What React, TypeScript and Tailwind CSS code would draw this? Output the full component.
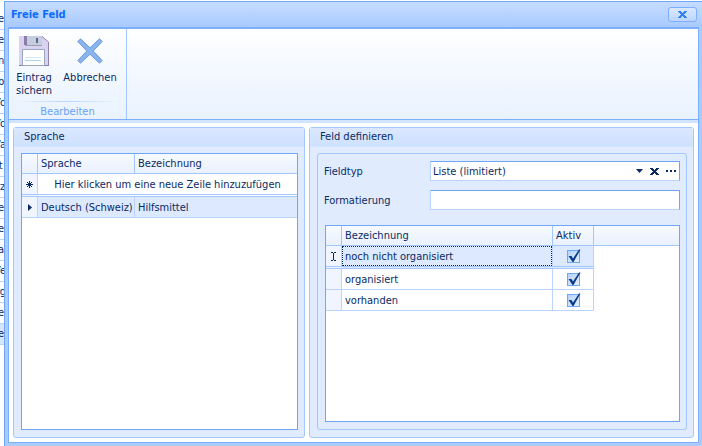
import { useState } from 'react';
import type { ReactNode } from 'react';

const backgroundRows = ['e', 'e', 'n', 'b', 'Vo', 'Vo', 'Va', 'lt', 'rz', 'e', 'e', 'a', 'Ve', 'rg', 'e', 'e'];

const initialValues = [
  { name: 'noch nicht organisiert', active: true },
  { name: 'organisiert', active: true },
  { name: 'vorhanden', active: true },
];

function SaveIcon() {
  return (
    <svg width="30" height="30" viewBox="0 0 30 30">
      <path d="M0 0H23L29.500 6V29.500H0Z" fill="#d9d3ef" />
      <path d="M23 0.500L29.500 6V29.500" fill="none" stroke="#9080b4" />
      <path d="M0 29h30v1H0z" fill="#8878b0" />
      <path d="M6 0h17v9H6z" fill="#c6cede" />
      <path d="M5 0h3v9H5z" fill="#8b7cae" />
      <path d="M6 9h17v1H6z" fill="#9aa0b8" />
      <path d="M17 2h2v5h-2z" fill="#586c8c" />
      <path d="M3.500 13.500h22v16h-22z" fill="#fff" stroke="#9aa6c6" />
      <path d="M6 21h16v1H6z" fill="#cfe9f8" />
      <path d="M6 24h16v1H6z" fill="#aad7ef" />
    </svg>
  );
}

function CancelIcon() {
  return (
    <svg width="26" height="26" viewBox="0 0 26 26">
      <path
        d="M3.5 0.8L13 9.8L22.5 0.8L25.2 3.5L16.2 13L25.2 22.5L22.5 25.2L13 16.2L3.5 25.2L0.8 22.5L9.8 13L0.8 3.5Z"
        fill="#8ab4ec"
        stroke="#6c9be0"
      />
    </svg>
  );
}

function CrossIcon() {
  return (
    <svg width="9" height="7" viewBox="0 0 9 7" fill="currentColor" shapeRendering="crispEdges">
      <path d="M0 0h3v1H0zM6 0h3v1H6zM1 1h3v1H1zM5 1h3v1H5zM2 2h5v1H2zM3 3h3v1H3zM2 4h5v1H2zM1 5h3v1H1zM5 5h3v1H5zM0 6h3v1H0zM6 6h3v1H6z" />
    </svg>
  );
}

function Panel({ title, children }: { title: string; children: ReactNode }) {
  return (
    <section className="flex min-w-0 flex-col rounded-[3px] border border-[#a3c7ff] bg-[#e0ebfe]">
      <h2 className="h-[18px] bg-linear-to-b from-[#dbe8ff] to-[#cfe1fe] pl-2.5 leading-[18px]">{title}</h2>
      <div className="flex flex-1 flex-col border-t border-[#d6e5fe] p-[7px] pr-1.5 pt-1.5">{children}</div>
    </section>
  );
}

function Check({ label, checked, onChange }: { label: string; checked: boolean; onChange: () => void }) {
  return (
    <label className="relative mx-auto block size-[13px]">
      <input
        type="checkbox"
        aria-label={label}
        checked={checked}
        onChange={onChange}
        className="block size-[13px] appearance-none border border-[#6ea6fb] bg-linear-to-br from-[#b4d2fc] to-[#e4effe]"
      />
      {checked && (
        <svg className="pointer-events-none absolute -top-px left-0" width="14" height="14" viewBox="0 0 14 14">
          <path d="M1.500 7L4.500 7L6 9.500L12 0.500H13.500L6.500 13H5.500Z" fill="#0b3c8c" />
        </svg>
      )}
    </label>
  );
}

const headCell = 'h-5 border-b border-r border-[#a3c7ff] pl-[3px] text-left font-normal';
const cell = 'h-[21px] border-b border-r border-[#b9d5ff] pl-[3px]';
const indicator = 'border-b border-r border-[#b9d5ff] bg-[#f0f5ff]';
// the first row is set off from the rest by a double rule
const pinned = 'h-[23px] border-b-3 border-b-[#a3c7ff] [border-bottom-style:double]';

function LanguageGrid() {
  return (
    <div className="flex-1 border border-[#6ea6fb] bg-white">
      <table className="w-full table-fixed border-separate border-spacing-0">
        <colgroup>
          <col className="w-4" />
          <col className="w-[97px]" />
          <col />
        </colgroup>
        <thead className="bg-linear-to-b from-[#f7faff] to-[#e9f1fe]">
          <tr>
            <th className={headCell} />
            <th className={headCell}>Sprache</th>
            <th className={`${headCell} border-r-0`}>Bezeichnung</th>
          </tr>
        </thead>
        <tbody>
          <tr>
            <td className={`${indicator} ${pinned}`}>
              <svg className="mx-auto" width="7" height="7" viewBox="0 0 7 7" stroke="#0a2a66">
                <path d="M3.500 0v7M0 3.500h7M1 1l5 5M6 1L1 6" />
              </svg>
            </td>
            <td colSpan={2} className={`${pinned} text-center`}>
              Hier klicken um eine neue Zeile hinzuzufügen
            </td>
          </tr>
          <tr className="bg-[#dde9fe]">
            <td className={indicator}>
              <svg className="ml-1.5" width="4" height="7" viewBox="0 0 4 7" fill="#0a2a66">
                <path d="M0 0L4 3.500L0 7Z" />
              </svg>
            </td>
            <td className={`${cell} whitespace-nowrap`}>Deutsch (Schweiz)</td>
            <td className={`${cell} border-r-0`}>Hilfsmittel</td>
          </tr>
        </tbody>
      </table>
    </div>
  );
}

function ValueGrid() {
  const [values, setValues] = useState(initialValues);

  const toggle = (name: string) =>
    setValues(values.map((v) => (v.name === name ? { ...v, active: !v.active } : v)));

  return (
    <div className="flex-1 border border-[#6ea6fb] bg-white">
      <table className="w-full table-fixed border-separate border-spacing-0">
        <colgroup>
          <col className="w-4" />
          <col />
          <col className="w-[41px]" />
          <col className="w-[85px]" />
        </colgroup>
        <thead className="bg-linear-to-b from-[#f7faff] to-[#e9f1fe]">
          <tr>
            <th className={headCell} />
            <th className={headCell}>Bezeichnung</th>
            <th className={headCell}>Aktiv</th>
            <th className={`${headCell} border-r-0`} />
          </tr>
        </thead>
        <tbody>
          {values.map(({ name, active }, i) => (
            <tr key={name}>
              <td className={`${indicator} ${i === 0 ? pinned : ''}`}>
                {i === 0 && (
                  <svg className="mx-auto" width="5" height="9" viewBox="0 0 5 9" stroke="#0a2a66" fill="none">
                    <path d="M0 0.500h2M3 0.500h2M0 8.500h2M3 8.500h2M2.500 1v7" />
                  </svg>
                )}
              </td>
              {i === 0 ? (
                <td className={`border-r border-r-[#b9d5ff] bg-[#dde9fe] ${pinned}`}>
                  <div className="flex h-5 items-center border border-dotted border-[#0a2a66] pl-0.5">{name}</div>
                </td>
              ) : (
                <td className={cell}>{name}</td>
              )}
              <td className={`border-b border-r border-[#b9d5ff] ${i === 0 ? `${pinned} bg-[#dde9fe]` : ''}`}>
                <Check label={`${name} aktiv`} checked={active} onChange={() => toggle(name)} />
              </td>
              <td />
            </tr>
          ))}
        </tbody>
      </table>
    </div>
  );
}

export default function App() {
  return (
    <div className="flex min-h-screen bg-white font-['DejaVu_Sans_Condensed','DejaVu_Sans',sans-serif] text-[11px] leading-[13px] text-[#0a2a66]">
      <aside className="w-1 shrink-0 overflow-hidden pt-[9px]">
        {backgroundRows.map((text, i) => (
          <div
            key={i}
            className={`h-[21px] border-b border-[#b9d5ff] leading-5 ${i === 15 ? 'bg-[#d6e5fe]' : ''}`}
          >
            <span className={text.startsWith('V') ? '-ml-1.5' : text.length > 1 ? '-ml-1' : '-ml-0.5'}>{text}</span>
          </div>
        ))}
      </aside>

      <div className="flex min-w-0 flex-1 flex-col pt-px">
        <main className="flex flex-1 flex-col border-l border-t border-[#6ea6fb] bg-[#abcbff]">
          <header className="flex h-[25px] items-center justify-between bg-linear-to-b from-[#c6dcff] to-[#a9caff] pl-1.5 pr-[5px]">
            <h1 className="font-bold text-[#0a6cff]">Freie Feld</h1>
            <button
              type="button"
              aria-label="Schliessen"
              className="flex h-[15px] w-[29px] items-center justify-center rounded-[3px] border border-[#7ab0ff] bg-linear-to-b from-[#dbe8ff] to-[#bcd6ff] text-[#2f80f0]"
            >
              <CrossIcon />
            </button>
          </header>

          <div className="mb-[3px] ml-[3px] mr-[3px] flex flex-1 flex-col border border-t-2 border-[#7ab0ff] bg-white">
            <div className="flex h-[91px] border-b border-[#7ab0ff] bg-linear-to-b from-white via-[#f3f8ff] to-[#e9f2fe]">
              <div className="flex w-[118px] flex-col border-r border-[#a3c7ff] px-[5px]">
                <div className="flex flex-1 items-start gap-1.5 pt-[7px]">
                  <button type="button" className="flex w-10 flex-col items-center gap-[5px]">
                    <SaveIcon />
                    <span>Eintrag sichern</span>
                  </button>
                  <button type="button" className="flex w-[60px] flex-col items-center gap-[7px] pt-0.5">
                    <CancelIcon />
                    <span>Abbrechen</span>
                  </button>
                </div>
                <div className="h-px bg-linear-to-r from-transparent via-[#b9d5ff] to-transparent" />
                <div className="h-[17px] text-center leading-5 text-[#68a2f8]">Bearbeiten</div>
              </div>
            </div>
            <div className="h-[3px] bg-[#d2e3ff]" />

            <div className="grid flex-1 grid-cols-[292fr_385fr] gap-1 p-1">
              <Panel title="Sprache">
                <LanguageGrid />
              </Panel>
              <Panel title="Feld definieren">
                <div className="flex flex-1 flex-col rounded-[3px] border border-[#a3c7ff] p-[7px] pr-1.5">
                  <div className="grid grid-cols-[105px_1fr] items-center gap-y-[9px]">
                    <label htmlFor="fieldtyp" className="-ml-px">
                      Fieldtyp
                    </label>
                    <div className="flex h-5 items-center border border-[#b9d5ff] border-t-[#6ea6fb] border-r-[#6ea6fb] bg-white">
                      <div className="relative flex h-full flex-1 items-center">
                        <select id="fieldtyp" className="h-full w-full appearance-none pl-0.5 outline-none">
                          <option>Liste (limitiert)</option>
                        </select>
                        <svg className="pointer-events-none absolute right-0.5" width="7" height="4" viewBox="0 0 7 4">
                          <path d="M0 0h7L3.500 4Z" fill="#0a2a66" />
                        </svg>
                      </div>
                      <button type="button" aria-label="Leeren" className="flex w-[18px] justify-center">
                        <CrossIcon />
                      </button>
                      <button type="button" aria-label="Bearbeiten" className="flex w-4 justify-center">
                        <svg width="10" height="2" viewBox="0 0 10 2" fill="#0a2a66">
                          <path d="M0 0h2v2H0zM4 0h2v2H4zM8 0h2v2H8z" />
                        </svg>
                      </button>
                    </div>
                    <label htmlFor="formatierung" className="-ml-px">
                      Formatierung
                    </label>
                    <input
                      id="formatierung"
                      type="text"
                      className="h-5 w-full border border-[#b9d5ff] border-t-[#6ea6fb] border-r-[#6ea6fb] bg-white px-0.5 outline-none"
                    />
                  </div>
                  <div className="mt-[15px] flex flex-1 flex-col">
                    <ValueGrid />
                  </div>
                </div>
              </Panel>
            </div>
          </div>
        </main>
      </div>
    </div>
  );
}
